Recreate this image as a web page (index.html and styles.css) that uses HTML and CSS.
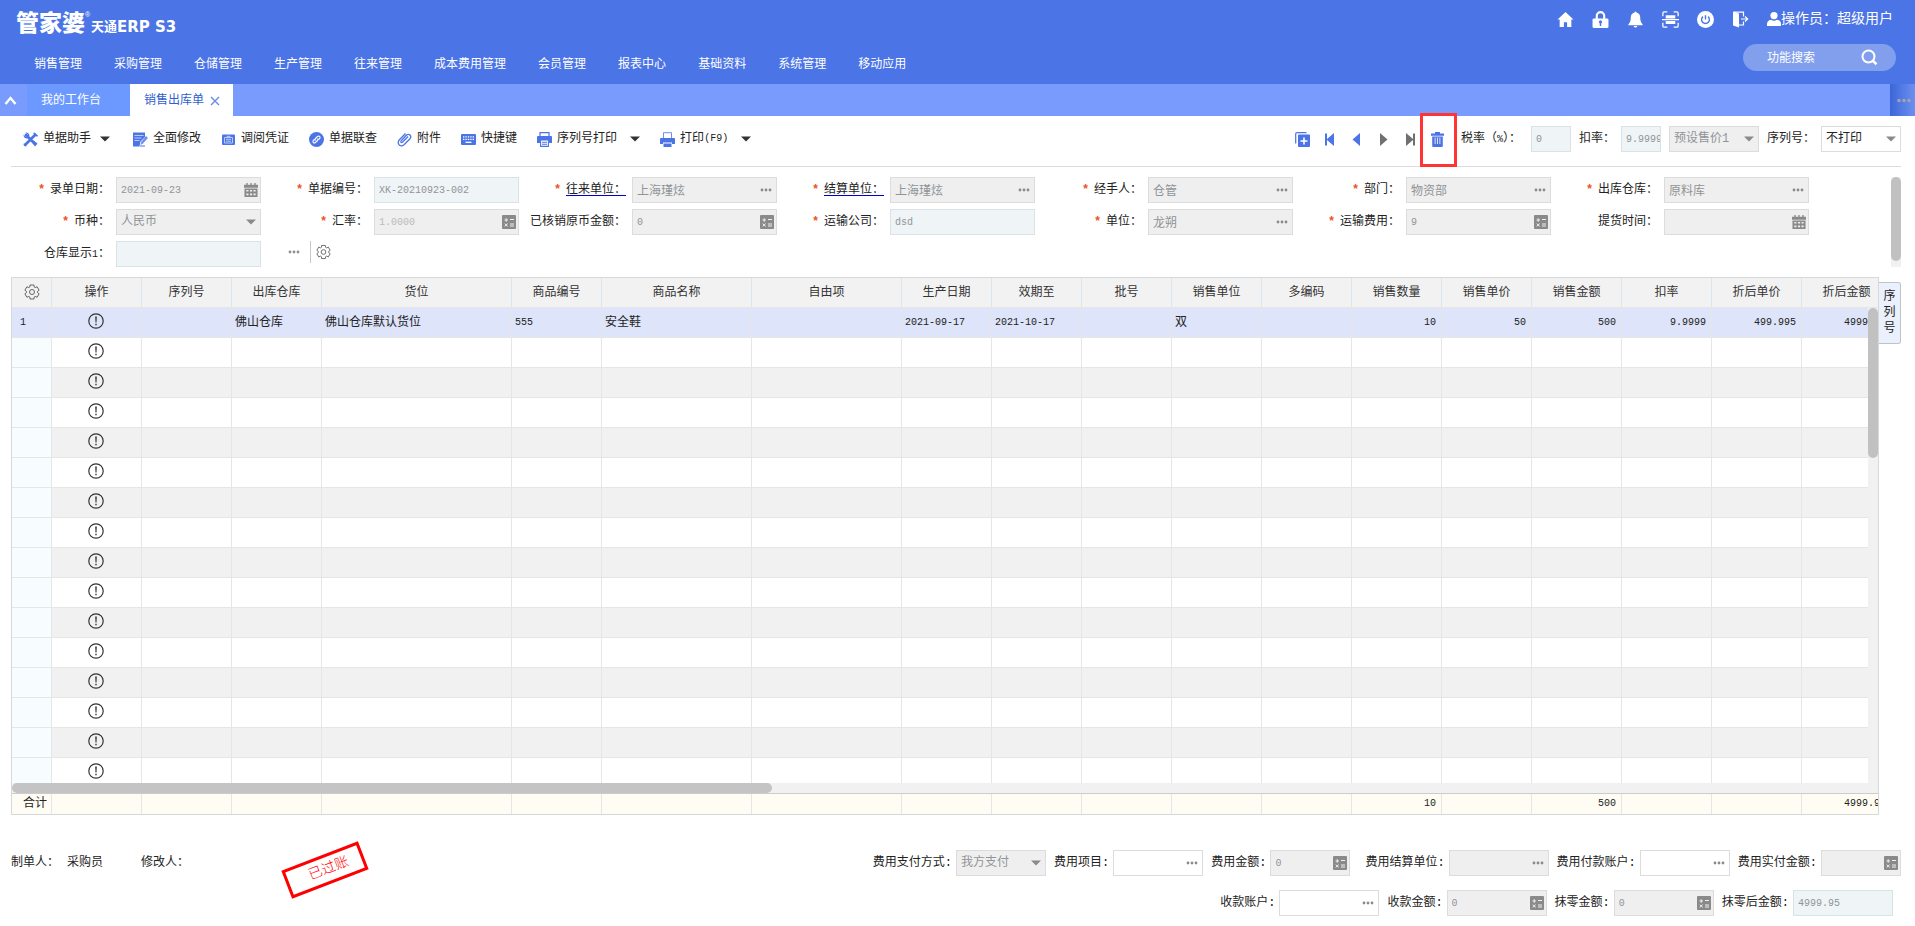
FILE: index.html
```html
<!DOCTYPE html>
<html lang="zh-CN">
<head>
<meta charset="utf-8">
<title>销售出库单</title>
<link rel="stylesheet" href="styles.css">
</head>
<body>
<svg class="defs" aria-hidden="true">
  <symbol id="i-home" viewBox="0 0 16 16"><path d="M8 1 0.5 8H2.5V15H6.5V10.5H9.5V15H13.5V8H15.5Z"/></symbol>
  <symbol id="i-lock" viewBox="0 0 16 16"><path fill-rule="evenodd" d="M2 7H3.500V4.500A4.500 4.500 0 0 1 12.500 4.500V7H14Q15.500 7 15.500 8V15Q15.500 16 14 16H2Q0.500 16 0.500 15V8Q0.500 7 2 7ZM5.500 7H10.500V4.500A2.500 2.500 0 0 0 5.500 4.500ZM7.300 14H8.700V11.800A1.500 1.500 0 1 0 7.300 11.800Z"/></symbol>
  <symbol id="i-bell" viewBox="0 0 16 18"><path d="M7 1.500A1 1 0 0 1 9 1.500Q13 2.500 13 7Q13 12 15.500 14V15H0.500V14Q3 12 3 7Q3 2.500 7 1.500ZM6 15.800H10Q9.500 17.500 8 17.500Q6.500 17.500 6 15.800Z"/></symbol>
  <symbol id="i-scan" viewBox="0 0 16 16"><path d="M0.800 5V2Q0.800 0.800 2 0.800H5M11 0.800H14Q15.200 0.800 15.200 2V5M15.200 11V14Q15.200 15.200 14 15.200H11M5 15.200H2Q0.800 15.200 0.800 14V11" fill="none" stroke="currentColor" stroke-width="1.200"/><path d="M3.500 4H12.500V7H3.500ZM0 7.500H16V8.800H0ZM3.500 9.300H12.500V12.300H3.500Z"/></symbol>
  <symbol id="i-power" viewBox="0 0 16 16"><circle cx="8" cy="8" r="8"/><path d="M8 4V8M5.600 5.300A3.700 3.700 0 1 0 10.400 5.300" fill="none" stroke="#4b74e6" stroke-width="1.300"/></symbol>
  <symbol id="i-exit" viewBox="0 0 17 16"><path d="M1 0 7 2V16L1 14Z"/><path d="M2 0.600H11.500V5M11.500 10V13.500H7M9 7.500H15M13 5 15.700 7.500 13 10" fill="none" stroke="currentColor" stroke-width="1.200"/></symbol>
  <symbol id="i-user" viewBox="0 0 14 14"><circle cx="7" cy="3.600" r="3.600"/><path d="M0 14V12Q0 8.500 4 7.800Q7 9.500 10 7.800Q14 8.500 14 12V14Z"/></symbol>
  <symbol id="i-search" viewBox="0 0 17 17"><circle cx="7.500" cy="7.500" r="6" fill="none" stroke="currentColor" stroke-width="2"/><path d="M11.500 11.500 15.500 15.200" stroke="currentColor" stroke-width="2.600"/></symbol>
  <symbol id="i-up" viewBox="0 0 13 9"><path d="M1.500 8 6.500 2 11.500 8" fill="none" stroke="currentColor" stroke-width="2.400"/></symbol>
  <symbol id="i-close" viewBox="0 0 10 10"><path d="M1 1 9 9M9 1 1 9" stroke="currentColor" stroke-width="1.400"/></symbol>
  <symbol id="i-caret" viewBox="0 0 10 6"><path d="M0 0.500H10L5 5.500Z"/></symbol>
  <symbol id="i-dots" viewBox="0 0 12 4"><circle cx="2" cy="2" r="1.400"/><circle cx="6" cy="2" r="1.400"/><circle cx="10" cy="2" r="1.400"/></symbol>
  <symbol id="i-tools" viewBox="0 0 15 15"><path d="M3 3 12 12M12 3 3 12" stroke="currentColor" stroke-width="2.800" stroke-linecap="round"/><path d="M0.500 2.500 3 5 5 3 2.500 0.500Q6 0 6.500 4L4 6.500Q0.500 6.500 0.500 2.500ZM10 1 14 5 15 3.500 11.500 0.500ZM9 10 10.500 8.500 14.500 11.500 12 14.500ZM1 11 4 14 2 14.500 0.500 13Z"/></symbol>
  <symbol id="i-edit" viewBox="0 0 15 15"><path d="M0 0.500H12V5L7.500 9.500 6.500 14.500H0Z"/><path d="M1.500 3.500H10.500M1.500 6H8.500M1.500 8.500H6.500" stroke="#fff" stroke-width="0.900" opacity="0.700"/><path d="M13 4 15 6 10 11.500 7.500 13 8.300 9.800Z" opacity="0.800"/><path d="M7 14H12" stroke="currentColor"/></symbol>
  <symbol id="i-voucher" viewBox="0 0 15 15"><path d="M2 2.500H13Q14 2.500 14 3.500V12Q14 13 13 13H2Q1 13 1 12V3.500Q1 2.500 2 2.500Z"/><path d="M3.500 5.500H11.500V11H3.500ZM5 7.300H10M5 9.200H10M6 5.500V4.300H9V5.500" fill="none" stroke="#c4d2fa" stroke-width="0.900"/></symbol>
  <symbol id="i-link" viewBox="0 0 15 15"><circle cx="7.500" cy="7.500" r="7.500"/><path d="M6.500 8.500Q5.500 7.500 6.500 6.500L8.500 4.500Q9.700 3.600 10.700 4.500 11.600 5.500 10.700 6.500L9.500 7.700M8.500 6.500Q9.500 7.500 8.500 8.500L6.500 10.500Q5.300 11.400 4.300 10.500 3.400 9.500 4.300 8.500L5.500 7.300" fill="none" stroke="#fff" stroke-width="1.100"/></symbol>
  <symbol id="i-clip" viewBox="0 0 15 15"><path d="M11 4.500 5.500 10.300Q4.300 11 3.900 10 3.700 9.300 4.500 8.500L9.500 3Q11.300 1.600 13 3 14.500 4.700 13 6.700L7 12.700Q4.500 14.800 2.200 12.900 0.200 10.500 2.200 8L8.500 1.500" fill="none" stroke="currentColor" stroke-width="1.300"/></symbol>
  <symbol id="i-keys" viewBox="0 0 15 15"><path d="M1 2H14Q15 2 15 3V12Q15 13 14 13H1Q0 13 0 12V3Q0 2 1 2Z"/><path d="M2 4.800H13M2 7.300H13" stroke="#fff" stroke-width="1.300" stroke-dasharray="1.400 1"/><path d="M4.500 10.300H10.500" stroke="#fff" stroke-width="1.300"/></symbol>
  <symbol id="i-print" viewBox="0 0 15 15"><path d="M3 4V0.700H12V4" fill="none" stroke="currentColor" stroke-width="1.200"/><path d="M1 4H14Q15 4 15 5V11H12V8H3V11H0V5Q0 4 1 4Z"/><path d="M3.600 8H11.400V14.400H3.600ZM5 10.200H10M5 12.200H10" fill="none" stroke="currentColor" stroke-width="1.100"/></symbol>
  <symbol id="i-print2" viewBox="0 0 15 15"><path d="M3.500 6V0.700H11.500V6" fill="none" stroke="currentColor" stroke-width="1" opacity="0.800"/><path d="M1 6H14Q15 6 15 7V12H12V10.500H3V12H0V7Q0 6 1 6ZM3.500 11.500H11.500V15H3.500Z"/></symbol>
  <symbol id="i-copy" viewBox="0 0 15 15"><path d="M0.700 11.500V2Q0.700 0.700 2 0.700H11.500" fill="none" stroke="currentColor" stroke-width="1.200"/><path fill-rule="evenodd" d="M4 2.500H14Q15 2.500 15 3.500V14Q15 15 14 15H4Q3 15 3 14V3.500Q3 2.500 4 2.500ZM8.200 5.500V8.200H5.500V9.800H8.200V12.500H9.800V9.800H12.500V8.200H9.800V5.500Z"/></symbol>
  <symbol id="i-first" viewBox="0 0 15 15"><path d="M3 1.500H5V7L12 1V14L5 8V13.500H3Z"/></symbol>
  <symbol id="i-prev" viewBox="0 0 15 15"><path d="M11 1V14L3.500 7.500Z"/></symbol>
  <symbol id="i-next" viewBox="0 0 15 15"><path d="M4 1V14L11.500 7.500Z"/></symbol>
  <symbol id="i-last" viewBox="0 0 15 15"><path d="M12 1.500H10V7L3 1V14L10 8V13.500H12Z"/></symbol>
  <symbol id="i-trash" viewBox="0 0 15 15"><path fill-rule="evenodd" d="M5 0H10V1.500H14V3.800H1V1.500H5ZM2.200 4.500H12.800V14Q12.800 15 11.800 15H3.200Q2.200 15 2.200 14ZM4.700 5.500V12H5.500V5.500ZM7.100 5.500V12H7.900V5.500ZM9.500 5.500V12H10.300V5.500Z"/></symbol>
  <symbol id="i-cal" viewBox="0 0 15 15"><path fill-rule="evenodd" d="M0 2H2.500V0H4V2H6.800V0H8.200V2H11V0H12.500V2H15V5H0ZM0.500 6H14.500V15H0.500ZM2.500 7.500V9.200H4.800V7.500ZM6.400 7.500V9.200H8.700V7.500ZM10.200 7.500V9.200H12.500V7.500ZM2.500 11.300V13H4.800V11.300ZM6.400 11.300V13H8.700V11.300ZM10.200 11.300V13H12.500V11.300Z"/></symbol>
  <symbol id="i-calc" viewBox="0 0 14 14"><rect width="14" height="14" rx="1"/><path d="M2.500 5H6M4.200 3.200V6.800M8 4.500H12M8 9H12M8 11H12M2.700 8.700 5.700 11.300M5.700 8.700 2.700 11.300" stroke="#f0f0f0" stroke-width="1"/></symbol>
  <symbol id="i-gear" viewBox="0 0 16 16"><path d="M6 1H10L10.200 3 11.200 3.600 13.100 2.750 15.100 6.200 13.500 7.400V8.600L15.100 9.800 13.100 13.250 11.200 12.400 10.200 13 10 15H6L5.800 13 4.800 12.400 2.900 13.250 0.900 9.800 2.500 8.600V7.400L0.900 6.200 2.900 2.750 4.800 3.600 5.800 3Z" fill="none" stroke="currentColor" stroke-linejoin="round"/><circle cx="8" cy="8" r="2.500" fill="none" stroke="currentColor"/></symbol>
  <symbol id="i-info" viewBox="0 0 16 16"><circle cx="8" cy="8" r="7.200" fill="none" stroke="currentColor" stroke-width="1.200"/><path d="M7.200 3.500H8.800L8.500 9.500H7.500ZM7.300 10.800H8.700V12.300H7.300Z"/></symbol>
</svg>

<header class="top">
  <div class="top-row">
    <h1 class="logo"><span class="logo-cn">管家婆</span><sup>®</sup><span class="logo-sub">天通</span><span class="logo-en">ERP S3</span></h1>
    <div class="top-tools">
      <button aria-label="首页"><svg><use href="#i-home"/></svg></button>
      <button aria-label="锁定"><svg><use href="#i-lock"/></svg></button>
      <button aria-label="消息"><svg><use href="#i-bell"/></svg></button>
      <button aria-label="扫描"><svg><use href="#i-scan"/></svg></button>
      <button aria-label="关机"><svg><use href="#i-power"/></svg></button>
      <button aria-label="退出"><svg><use href="#i-exit"/></svg></button>
      <span class="user"><svg><use href="#i-user"/></svg>操作员：超级用户</span>
    </div>
  </div>
  <div class="nav-row">
    <nav class="menu">
      <a href="#">销售管理</a><a href="#">采购管理</a><a href="#">仓储管理</a><a href="#">生产管理</a><a href="#">往来管理</a><a href="#">成本费用管理</a><a href="#">会员管理</a><a href="#">报表中心</a><a href="#">基础资料</a><a href="#">系统管理</a><a href="#">移动应用</a>
    </nav>
    <div class="search"><input type="text" placeholder="功能搜索" aria-label="功能搜索"><button aria-label="搜索"><svg><use href="#i-search"/></svg></button></div>
  </div>
</header>

<div class="tabs">
  <button class="tab-scroll" aria-label="收起"><svg><use href="#i-up"/></svg></button>
  <button class="tab">我的工作台</button>
  <button class="tab tab-on">销售出库单<svg><use href="#i-close"/></svg></button>
  <button class="tab-more" aria-label="更多"><svg><use href="#i-dots"/></svg></button>
</div>

<main class="page">
  <div class="toolbar">
    <div class="actions">
      <button class="helper"><svg><use href="#i-tools"/></svg>单据助手<svg class="caret"><use href="#i-caret"/></svg></button>
      <button><svg><use href="#i-edit"/></svg>全面修改</button>
      <button><svg><use href="#i-voucher"/></svg>调阅凭证</button>
      <button><svg><use href="#i-link"/></svg>单据联查</button>
      <button><svg><use href="#i-clip"/></svg>附件</button>
      <button><svg><use href="#i-keys"/></svg>快捷键</button>
      <button><svg><use href="#i-print"/></svg>序列号打印<svg class="caret"><use href="#i-caret"/></svg></button>
      <button><svg><use href="#i-print2"/></svg>打印<span class="n">(F9)</span><svg class="caret"><use href="#i-caret"/></svg></button>
    </div>
    <div class="steps">
      <button aria-label="复制新增"><svg><use href="#i-copy"/></svg></button>
      <button aria-label="首张"><svg><use href="#i-first"/></svg></button>
      <button aria-label="上一张"><svg><use href="#i-prev"/></svg></button>
      <button aria-label="下一张" class="off"><svg><use href="#i-next"/></svg></button>
      <button aria-label="末张" class="off"><svg><use href="#i-last"/></svg></button>
      <button aria-label="删除" class="marked"><svg><use href="#i-trash"/></svg></button>
    </div>
    <div class="rates">
      <div class="field tax"><label for="tax">税率（<span class="n">%</span>）：</label><div class="box w40 ro"><input class="n" id="tax" value="0" readonly></div></div>
      <div class="field"><label for="disc">扣率：</label><div class="box w40 ro"><input class="n" id="disc" value="9.9999" readonly></div></div>
      <div class="box w90 dis"><select aria-label="价格" disabled><option>预设售价1</option></select><svg class="arrow"><use href="#i-caret"/></svg></div>
      <div class="field"><label for="serial">序列号：</label><div class="box w80"><select id="serial"><option>不打印</option></select><svg class="arrow"><use href="#i-caret"/></svg></div></div>
    </div>
  </div>

  <div class="form">
    <div class="form-grid">
      <div class="field"><b>*</b><label for="f1">录单日期：</label><div class="box dis"><input class="n" id="f1" value="2021-09-23" disabled><svg class="ic"><use href="#i-cal"/></svg></div></div>
      <div class="field"><b>*</b><label for="f2">单据编号：</label><div class="box ro"><input class="n" id="f2" value="XK-20210923-002" readonly></div></div>
      <div class="field"><b>*</b><label for="f3" class="lnk">往来单位：</label><div class="box dis"><input id="f3" value="上海瑾炫" disabled><svg class="dots"><use href="#i-dots"/></svg></div></div>
      <div class="field"><b>*</b><label for="f4" class="lnk">结算单位：</label><div class="box dis"><input id="f4" value="上海瑾炫" disabled><svg class="dots"><use href="#i-dots"/></svg></div></div>
      <div class="field"><b>*</b><label for="f5">经手人：</label><div class="box dis"><input id="f5" value="仓管" disabled><svg class="dots"><use href="#i-dots"/></svg></div></div>
      <div class="field"><b>*</b><label for="f6">部门：</label><div class="box dis"><input id="f6" value="物资部" disabled><svg class="dots"><use href="#i-dots"/></svg></div></div>
      <div class="field"><b>*</b><label for="f7">出库仓库：</label><div class="box dis"><input id="f7" value="原料库" disabled><svg class="dots"><use href="#i-dots"/></svg></div></div>
      <div class="field"><b>*</b><label for="f8">币种：</label><div class="box dis"><select id="f8" disabled><option>人民币</option></select><svg class="arrow"><use href="#i-caret"/></svg></div></div>
      <div class="field"><b>*</b><label for="f9">汇率：</label><div class="box dis faint"><input class="n" id="f9" value="1.0000" disabled><svg class="ic"><use href="#i-calc"/></svg></div></div>
      <div class="field"><label for="f10">已核销原币金额：</label><div class="box dis"><input class="n" id="f10" value="0" disabled><svg class="ic"><use href="#i-calc"/></svg></div></div>
      <div class="field"><b>*</b><label for="f11">运输公司：</label><div class="box ro"><input class="n" id="f11" value="dsd" readonly></div></div>
      <div class="field"><b>*</b><label for="f12">单位：</label><div class="box dis"><input id="f12" value="龙朔" disabled><svg class="dots"><use href="#i-dots"/></svg></div></div>
      <div class="field"><b>*</b><label for="f13">运输费用：</label><div class="box dis"><input class="n" id="f13" value="9" disabled><svg class="ic"><use href="#i-calc"/></svg></div></div>
      <div class="field"><label for="f14">提货时间：</label><div class="box dis"><input id="f14" disabled><svg class="ic"><use href="#i-cal"/></svg></div></div>
      <div class="field"><label for="f15">仓库显示<span class="n">1</span>：</label><div class="box ro"><input id="f15" readonly></div></div>
      <div class="extra"><button aria-label="更多字段"><svg class="dots"><use href="#i-dots"/></svg></button><button class="cfg" aria-label="设置"><svg class="gear"><use href="#i-gear"/></svg></button></div>
    </div>
    <div class="track"><div class="thumb"></div></div>
  </div>

  <div class="sheet">
    <div class="grid">
      <table class="head">
        <colgroup><col class="c40"><col span="3"><col class="c190"><col><col span="2" class="c150"><col span="11"></colgroup>
        <tr><th><svg class="gear"><use href="#i-gear"/></svg><th>操作<th>序列号<th>出库仓库<th>货位<th>商品编号<th>商品名称<th>自由项<th>生产日期<th>效期至<th>批号<th>销售单位<th>多编码<th>销售数量<th>销售单价<th>销售金额<th>扣率<th>折后单价<th>折后金额</tr>
      </table>
      <div class="body">
        <div class="view">
          <table class="rows">
            <colgroup><col class="c40"><col span="3"><col class="c190"><col><col span="2" class="c150"><col span="11"></colgroup>
            <tr class="sel"><td class="n">1<td><svg><use href="#i-info"/></svg><td><td>佛山仓库<td>佛山仓库默认货位<td class="n">555<td>安全鞋<td><td class="n">2021-09-17<td class="n">2021-10-17<td><td>双<td><td class="n r">10<td class="n r">50<td class="n r">500<td class="n r">9.9999<td class="n r">499.995<td class="n r">4999.95</tr>
            <tr><td><td><svg><use href="#i-info"/></svg><td><td><td><td><td><td><td><td><td><td><td><td><td><td><td><td><td></tr>
            <tr><td><td><svg><use href="#i-info"/></svg><td><td><td><td><td><td><td><td><td><td><td><td><td><td><td><td><td></tr>
            <tr><td><td><svg><use href="#i-info"/></svg><td><td><td><td><td><td><td><td><td><td><td><td><td><td><td><td><td></tr>
            <tr><td><td><svg><use href="#i-info"/></svg><td><td><td><td><td><td><td><td><td><td><td><td><td><td><td><td><td></tr>
            <tr><td><td><svg><use href="#i-info"/></svg><td><td><td><td><td><td><td><td><td><td><td><td><td><td><td><td><td></tr>
            <tr><td><td><svg><use href="#i-info"/></svg><td><td><td><td><td><td><td><td><td><td><td><td><td><td><td><td><td></tr>
            <tr><td><td><svg><use href="#i-info"/></svg><td><td><td><td><td><td><td><td><td><td><td><td><td><td><td><td><td></tr>
            <tr><td><td><svg><use href="#i-info"/></svg><td><td><td><td><td><td><td><td><td><td><td><td><td><td><td><td><td></tr>
            <tr><td><td><svg><use href="#i-info"/></svg><td><td><td><td><td><td><td><td><td><td><td><td><td><td><td><td><td></tr>
            <tr><td><td><svg><use href="#i-info"/></svg><td><td><td><td><td><td><td><td><td><td><td><td><td><td><td><td><td></tr>
            <tr><td><td><svg><use href="#i-info"/></svg><td><td><td><td><td><td><td><td><td><td><td><td><td><td><td><td><td></tr>
            <tr><td><td><svg><use href="#i-info"/></svg><td><td><td><td><td><td><td><td><td><td><td><td><td><td><td><td><td></tr>
            <tr><td><td><svg><use href="#i-info"/></svg><td><td><td><td><td><td><td><td><td><td><td><td><td><td><td><td><td></tr>
            <tr><td><td><svg><use href="#i-info"/></svg><td><td><td><td><td><td><td><td><td><td><td><td><td><td><td><td><td></tr>
            <tr><td><td><svg><use href="#i-info"/></svg><td><td><td><td><td><td><td><td><td><td><td><td><td><td><td><td><td></tr>
          </table>
        </div>
        <div class="track"><div class="thumb"></div></div>
      </div>
      <div class="htrack"><div class="hthumb"></div></div>
      <table class="total">
        <colgroup><col class="c40"><col span="3"><col class="c190"><col><col span="2" class="c150"><col span="11"></colgroup>
        <tr><td>合计<td><td><td><td><td><td><td><td><td><td><td><td><td class="n r">10<td><td class="n r">500<td><td><td class="n r">4999.95</tr>
      </table>
    </div>
    <button class="side">序列号</button>
  </div>

  <footer class="foot">
    <div class="people">
      <span>制单人：</span><span class="who">采购员</span><span>修改人：</span>
      <div class="stamp">已过账</div>
    </div>
    <div class="fees">
      <div class="fee-row">
        <div class="field"><label for="g1">费用支付方式:</label><div class="box w90 dis"><select id="g1" disabled><option>我方支付</option></select><svg class="arrow"><use href="#i-caret"/></svg></div></div>
        <div class="field"><label for="g2">费用项目:</label><div class="box w90"><input id="g2"><svg class="dots"><use href="#i-dots"/></svg></div></div>
        <div class="field"><label for="g3">费用金额:</label><div class="box w80 dis"><input class="n" id="g3" value="0" disabled><svg class="ic"><use href="#i-calc"/></svg></div></div>
        <div class="field apart"><label for="g4">费用结算单位:</label><div class="box w100 dis"><input id="g4" disabled><svg class="dots"><use href="#i-dots"/></svg></div></div>
        <div class="field"><label for="g5">费用付款账户:</label><div class="box w90"><input id="g5"><svg class="dots"><use href="#i-dots"/></svg></div></div>
        <div class="field"><label for="g6">费用实付金额:</label><div class="box w80 dis"><input id="g6" disabled><svg class="ic"><use href="#i-calc"/></svg></div></div>
      </div>
      <div class="fee-row fee-sub">
        <div class="field"><label for="g7">收款账户:</label><div class="box w100"><input id="g7"><svg class="dots"><use href="#i-dots"/></svg></div></div>
        <div class="field"><label for="g8">收款金额:</label><div class="box w100 dis"><input class="n" id="g8" value="0" disabled><svg class="ic"><use href="#i-calc"/></svg></div></div>
        <div class="field"><label for="g9">抹零金额:</label><div class="box w100 dis"><input class="n" id="g9" value="0" disabled><svg class="ic"><use href="#i-calc"/></svg></div></div>
        <div class="field"><label for="g10">抹零后金额:</label><div class="box w100 ro"><input class="n" id="g10" value="4999.95" readonly></div></div>
      </div>
    </div>
  </footer>
</main>
</body>
</html>
```
FILE: styles.css
```css
*, *::after { box-sizing: border-box; }
body {
  margin: 0;
  height: 100vh;
  display: flex;
  flex-direction: column;
  overflow: hidden;
  background: #fff;
  color: #222;
  font: 12px/16px "Liberation Mono", "Noto Sans CJK SC", monospace;
}
button, input, select { font: inherit; color: inherit; }
button { border: 0; padding: 0; background: none; cursor: pointer; }
svg { display: block; flex: none; fill: currentColor; }
.defs { position: absolute; width: 0; height: 0; }
.n { font-size: 10px; }

/* Header */
.top { flex: none; background: #4b74e6; color: #fff; }
.top-row { display: flex; justify-content: space-between; height: 38px; padding: 0 22px 0 16px; }
.logo { display: flex; align-items: flex-end; margin: 0; font-size: 13px; line-height: 16px; }
.logo-cn { font-size: 23px; line-height: 26px; font-weight: 900; }
.logo sup { align-self: flex-start; margin-top: 11px; width: 6px; font: 7px/8px "Liberation Sans", sans-serif; }
.logo-sub { padding-bottom: 2px; }
.logo-en { padding-bottom: 2px; font: bold 15px/18px "DejaVu Sans", sans-serif; }
.top-tools { display: flex; align-items: center; gap: 18px; }
.top-tools svg { width: 17px; height: 17px; }
.user { display: flex; align-items: center; font-size: 14px; line-height: 20px; }
.top-tools .user svg { width: 14px; height: 14px; }
.nav-row { display: flex; justify-content: space-between; align-items: flex-start; height: 46px; padding: 6px 19px 0 18px; }
.menu { display: flex; padding-top: 1px; }
.menu a { padding: 0 16px; line-height: 40px; color: inherit; text-decoration: none; }
.search { display: flex; align-items: center; justify-content: space-between; width: 153px; height: 27px; padding: 0 18px 0 24px; border-radius: 14px; background: #829fee; }
.search input { width: 80px; padding: 2px 0 0; border: 0; outline: 0; background: none; }
.search input::placeholder { color: #fff; opacity: 1; }
.search svg { width: 17px; height: 17px; }

/* Tabs */
.tabs { flex: none; display: flex; height: 32px; background: #789bfd; color: #fff; }
.tab-scroll { width: 27px; padding-left: 4px; }
.tab-scroll svg { width: 13px; height: 9px; }
.tab { display: flex; align-items: center; gap: 6px; width: 103px; padding: 2px 0 0 14px; background: #6c99ff; }
.tab-on { background: #fff; color: #2f5fd0; }
.tab svg { width: 10px; height: 10px; color: #6a8be6; }
.tab-more { width: 25px; margin-left: auto; padding-left: 6px; background: linear-gradient(90deg, #3c66d8, #6c90f0); color: #a3a3b0; }
.tab-more svg { width: 16px; height: 5px; }

/* Toolbar */
.page { flex: 1; min-height: 0; display: flex; flex-direction: column; padding: 0 14px 10px 11px; }
.toolbar { flex: none; display: flex; align-items: center; height: 51px; padding-bottom: 4px; border-bottom: 1px solid #ddd; }
.actions { display: flex; gap: 20px; padding-left: 12px; }
.actions button { display: flex; align-items: center; white-space: nowrap; }
.actions svg { width: 15px; height: 15px; margin-right: 5px; color: #4b74e6; }
.actions svg.caret { width: 10px; height: 6px; margin: 0 0 0 13px; color: #333; }
.actions .helper .caret { margin: 0 3px 0 9px; }
.steps { display: flex; margin-left: auto; color: #4b74e6; }
.steps button { display: flex; justify-content: center; align-items: center; width: 27px; height: 26px; }
.steps svg { width: 15px; height: 15px; }
.steps .off { color: #707070; }
.steps .marked { position: relative; }
.marked::after { content: ""; position: absolute; left: -4px; top: -13px; width: 37px; height: 54px; border: 3px solid #ff3434; }
.rates { display: flex; gap: 8px; margin-left: 10px; }

/* Fields */
.field { display: flex; align-items: center; justify-content: flex-end; white-space: nowrap; }
.field b { width: 12px; color: #f0501e; font-weight: bold; }
.box { display: flex; align-items: center; width: 145px; height: 26px; margin-left: 6px; padding-right: 2px; border: 1px solid #dcdcdc; background: #fff; }
.box input, .box select { flex: 1; min-width: 0; width: 100%; height: 24px; padding: 0 0 0 4px; border: 0; outline: 0; background: none; appearance: none; opacity: 1; }
.dis { background: #efefef; }
.ro { background: #eff4f6; border-color: #d9e2e7; }
.dis input, .dis select, .ro input { color: #8f9497; }
.faint input { color: #bbb; }
.box svg { color: #8a8a8a; }
.box .ic { width: 14px; height: 14px; }
.dots { width: 12px; height: 4px; color: #8f8f8f; }
.box .dots { margin-right: 2px; }
.box .arrow { width: 10px; height: 6px; margin-right: 2px; }
.w40 { width: 40px; padding-right: 0; }
.w80 { width: 80px; }
.w90 { width: 90px; }
.w100 { width: 100px; }
.tax .box { margin-left: 10px; }
.rates > .box { margin-left: 0; }
.lnk { text-decoration: underline; text-decoration-color: #00c; text-underline-offset: 2px; }

/* Document form */
.form { flex: none; display: flex; justify-content: space-between; padding-top: 10px; }
.form-grid { display: flex; flex-wrap: wrap; row-gap: 6px; flex: 1; margin-left: -8px; }
.form-grid .field { width: 258px; }
.extra { display: flex; align-items: center; padding: 0 0 4px 27px; }
.cfg { margin-left: 10px; padding-left: 5px; border-left: 1px solid #c8c8c8; }
.cfg .gear { width: 15px; height: 22px; color: #666; }
.track { flex: none; width: 10px; background: #f1f1f1; }
.thumb { border-radius: 5px; background: #c1c1c1; }
.form .thumb { height: 84px; }

/* Detail grid */
.sheet { flex: 1; min-height: 0; display: flex; align-items: flex-start; margin-top: 10px; }
.grid { flex: 1; min-width: 0; height: 100%; display: flex; flex-direction: column; overflow: hidden; border: 1px solid #d6d9dc; }
table { flex: none; width: 1880px; table-layout: fixed; border-collapse: separate; border-spacing: 0; }
col { width: 90px; }
.c40 { width: 40px; }
.c150 { width: 150px; }
.c190 { width: 190px; }
th, td { height: 30px; padding: 0; border: solid #e6e6e6; border-width: 0 1px 1px 0; font-weight: normal; white-space: nowrap; }
th { padding-top: 1px; background: #f2f2f2; border-right-color: #dae5ee; color: #333; }
.head .gear { width: 16px; height: 16px; margin: 0 auto 2px; color: #666; }
.body { flex: 1; min-height: 0; display: flex; }
.view { flex: 1; min-width: 0; overflow: hidden; }
.body .thumb { height: 150px; }
td { padding: 0 5px 0 3px; }
.rows td:first-child { padding-left: 8px; background: #f7fcff; }
.rows tr:nth-child(odd) { background: #f1f1f1; }
.rows tr.sel, .rows tr.sel td:first-child { background: #dee4f9; }
.rows svg { width: 16px; height: 16px; margin: 0 auto 3px; color: #333; }
.r { text-align: right; }
.htrack { flex: none; height: 10px; background: #f1f1f1; }
.hthumb { width: 760px; height: 10px; border-radius: 5px; background: #c4c4c4; }
.total { border-top: 1px solid #ccc; }
.total td { height: 20px; border-bottom: 0; background: #fffdf3; }
.total td:first-child { padding: 0 4px; text-align: right; }
.side { width: 22px; height: 62px; margin-top: 5px; padding: 0 4px; border: 1px solid #bfc3cc; border-left: 0; border-radius: 0 3px 3px 0; background: #ebf0fd; line-height: 16px; word-break: break-all; }

/* Footer */
.foot { flex: none; display: flex; justify-content: space-between; padding-top: 35px; }
.people { display: flex; align-items: flex-start; line-height: 26px; white-space: nowrap; }
.who { margin: 0 38px 0 8px; }
.stamp { width: 82px; height: 30px; margin: 5px 0 0 95px; padding-left: 8px; border: 3px solid #f00; color: #f00; font-size: 14px; font-weight: 300; line-height: 24px; text-align: center; transform: rotate(-21deg); }
.fees { display: flex; flex-direction: column; gap: 14px; }
.fee-row { display: flex; justify-content: flex-end; gap: 8px; }
.fee-row .box { margin-left: 4px; }
.fee-sub { padding-right: 8px; }
.apart { margin-left: 7px; }
```
